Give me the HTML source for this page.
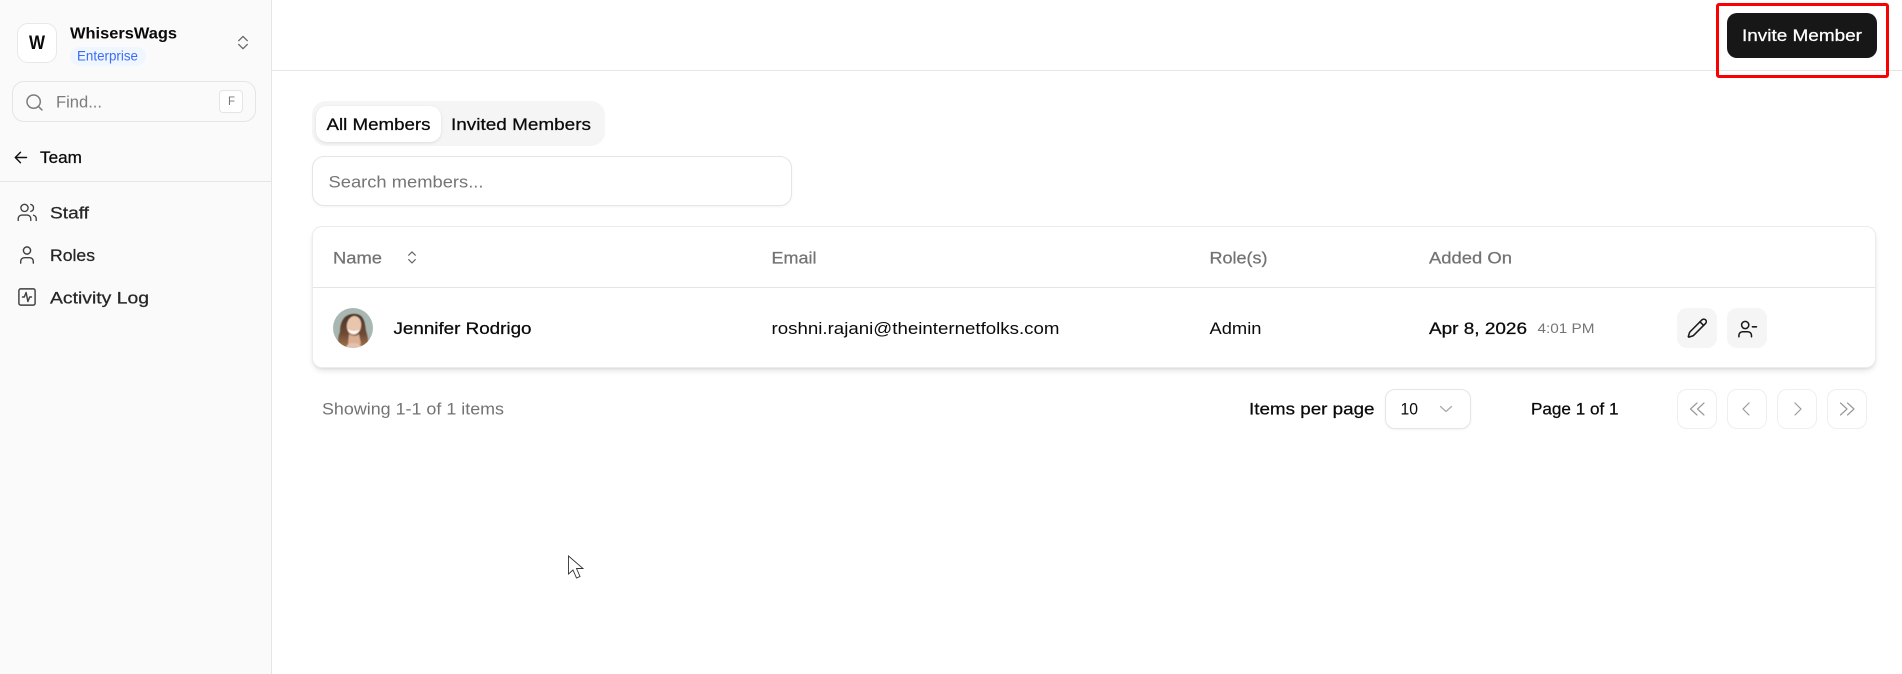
<!DOCTYPE html>
<html lang="en">
<head>
<meta charset="utf-8">
<title>Team - Staff</title>
<style>
html,body{margin:0;padding:0;width:1902px;height:674px;overflow:hidden;background:#fff}
body{position:relative;font-family:"Liberation Sans",sans-serif}
.b{position:absolute;box-sizing:border-box}
svg.o{position:absolute;left:0;top:0}
svg.o text{font-family:"Liberation Sans",sans-serif;font-size:16.5px}
.m{stroke:currentColor;stroke-width:.25px}
.i{fill:none;stroke-linecap:round;stroke-linejoin:round}
</style>
</head>
<body>
<div class="b" style="left:0;top:0;width:272px;height:674px;background:#fafafa;border-right:1px solid #e5e5e5"></div>
<div class="b" style="left:272px;top:70px;width:1630px;height:1px;background:#e5e5e5"></div>
<div class="b" style="left:0;top:181px;width:271px;height:1px;background:#e5e5e5"></div>
<div class="b" style="left:17px;top:23px;width:40px;height:40px;border:1px solid #e8e8e8;border-radius:11px;background:#fff"></div>
<div class="b" style="left:70px;top:47px;width:76px;height:19px;border-radius:10px;background:#eff6ff"></div>
<div class="b" style="left:12px;top:81px;width:244px;height:41px;border:1px solid #e5e5e5;border-radius:12px"></div>
<div class="b" style="left:219px;top:90px;width:24px;height:23px;border:1px solid #e5e5e5;border-radius:4px;background:#fff"></div>

<div class="b" style="left:312px;top:101px;width:293px;height:45px;border-radius:14px;background:#f5f5f5"></div>
<div class="b" style="left:316px;top:106px;width:125px;height:36px;border-radius:11px;background:#fff;box-shadow:0 1px 3px rgba(0,0,0,.1)"></div>
<div class="b" style="left:312px;top:156px;width:480px;height:50px;border:1px solid #e5e5e5;border-radius:12px;background:#fff;box-shadow:0 1px 2px rgba(0,0,0,.05)"></div>
<div class="b" style="left:312px;top:226px;width:1564px;height:142px;border:1px solid #ececec;border-radius:10px;background:#fff;box-shadow:0 4px 7px -2px rgba(0,0,0,.13),0 1px 2px rgba(0,0,0,.06)"></div>
<div class="b" style="left:313px;top:287px;width:1562px;height:1px;background:#e5e5e5"></div>
<div class="b" style="left:1677px;top:308px;width:40px;height:40px;border-radius:10px;background:#f5f5f5"></div>
<div class="b" style="left:1727px;top:308px;width:40px;height:40px;border-radius:10px;background:#f5f5f5"></div>

<div class="b" style="left:1385px;top:389px;width:86px;height:40px;border:1px solid #e5e5e5;border-radius:10px;background:#fff;box-shadow:0 1px 2px rgba(0,0,0,.05)"></div>
<div class="b" style="left:1677px;top:389px;width:40px;height:40px;border:1px solid #efefef;border-radius:10px"></div>
<div class="b" style="left:1727px;top:389px;width:40px;height:40px;border:1px solid #efefef;border-radius:10px"></div>
<div class="b" style="left:1777px;top:389px;width:40px;height:40px;border:1px solid #efefef;border-radius:10px"></div>
<div class="b" style="left:1827px;top:389px;width:40px;height:40px;border:1px solid #efefef;border-radius:10px"></div>

<div class="b" style="left:1727px;top:13px;width:150px;height:45px;border-radius:10px;background:#171717"></div>
<div class="b" style="left:1716px;top:3px;width:173px;height:75px;border:3.5px solid #fb0000;border-radius:3px"></div>

<svg class="o" width="1902" height="674" viewBox="0 0 1902 674" xmlns="http://www.w3.org/2000/svg">
  <defs>
    <clipPath id="av"><circle cx="353" cy="328" r="20"/></clipPath>
    <linearGradient id="hair" x1="0" y1="0" x2="0" y2="1"><stop offset="0" stop-color="#4a3228"/><stop offset=".55" stop-color="#6e4a34"/><stop offset="1" stop-color="#a97a52"/></linearGradient>
    <filter id="bl" x="-10%" y="-10%" width="120%" height="120%"><feGaussianBlur stdDeviation=".6"/></filter>
  </defs>

  <!-- sidebar text -->
  <text x="29" y="49" textLength="16" lengthAdjust="spacingAndGlyphs" font-weight="700" style="font-size:19px" fill="#0a0a0a">W</text>
  <text x="70" y="38.5" textLength="107" lengthAdjust="spacingAndGlyphs" font-weight="700" style="font-size:16px" fill="#0a0a0a">WhisersWags</text>
  <text x="77" y="60.5" textLength="61" lengthAdjust="spacingAndGlyphs" style="font-size:14px" fill="#3b6cf6">Enterprise</text>
  <text x="56" y="107.5" textLength="46" lengthAdjust="spacingAndGlyphs" fill="#7c7c7c">Find...</text>
  <text x="228" y="105" textLength="7" lengthAdjust="spacingAndGlyphs" style="font-size:12px" fill="#777">F</text>
  <text x="40" y="163" textLength="42" lengthAdjust="spacingAndGlyphs" class="m" color="#0a0a0a" fill="#0a0a0a">Team</text>
  <text x="50" y="218.5" textLength="39" lengthAdjust="spacingAndGlyphs" class="m" color="#262626" fill="#262626">Staff</text>
  <text x="50" y="261" textLength="45" lengthAdjust="spacingAndGlyphs" class="m" color="#262626" fill="#262626">Roles</text>
  <text x="50" y="303.5" textLength="99" lengthAdjust="spacingAndGlyphs" class="m" color="#262626" fill="#262626">Activity Log</text>

  <!-- sidebar icons -->
  <g class="i" stroke="#666" stroke-width="1.3"><path d="M238.7 40.7l4.3-4.3 4.3 4.3"/><path d="M238.7 44.4l4.3 4.3 4.3-4.3"/></g>
  <g class="i" stroke="#7c7c7c" stroke-width="1.8" transform="translate(24.5 92.5) scale(.83)"><circle cx="11" cy="11" r="8"/><path d="m21 21-4.3-4.3"/></g>
  <g class="i" stroke="#111" stroke-width="1.4"><path d="M26.5 157.5H15.5"/><path d="M20.5 152.3l-5.2 5.2 5.2 5.2"/></g>
  <g class="i" stroke="#404040" stroke-width="1.5" transform="translate(16.4 201.6) scale(.9)"><path d="M16 21v-2a4 4 0 0 0-4-4H6a4 4 0 0 0-4 4v2"/><circle cx="9" cy="7" r="4"/><path d="M22 21v-2a4 4 0 0 0-3-3.87"/><path d="M16 3.13a4 4 0 0 1 0 7.75"/></g>
  <g class="i" stroke="#404040" stroke-width="1.6" transform="translate(16.2 244.2) scale(.9)"><path d="M19 21v-2a4 4 0 0 0-4-4H9a4 4 0 0 0-4 4v2"/><circle cx="12" cy="7" r="4"/></g>
  <g class="i" stroke="#404040" stroke-width="1.6" transform="translate(16.2 286.2) scale(.9)"><rect x="3" y="3" width="18" height="18" rx="2"/><path d="M17 12h-2l-2 5-2-10-2 5H7"/></g>

  <!-- tabs / search -->
  <text x="326.5" y="130" textLength="104" lengthAdjust="spacingAndGlyphs" class="m" color="#0a0a0a" fill="#0a0a0a">All Members</text>
  <text x="451" y="130" textLength="140" lengthAdjust="spacingAndGlyphs" class="m" color="#0a0a0a" fill="#0a0a0a">Invited Members</text>
  <text x="328.5" y="187.5" textLength="155" lengthAdjust="spacingAndGlyphs" fill="#757575">Search members...</text>

  <!-- table -->
  <text x="333" y="263.5" textLength="49" lengthAdjust="spacingAndGlyphs" class="m" color="#737373" fill="#737373">Name</text>
  <text x="771.5" y="263.5" textLength="45" lengthAdjust="spacingAndGlyphs" class="m" color="#737373" fill="#737373">Email</text>
  <text x="1209.5" y="263.5" textLength="58" lengthAdjust="spacingAndGlyphs" class="m" color="#737373" fill="#737373">Role(s)</text>
  <text x="1429" y="263.5" textLength="83" lengthAdjust="spacingAndGlyphs" class="m" color="#737373" fill="#737373">Added On</text>
  <g class="i" stroke="#666" stroke-width="1.2"><path d="M408.7 255.2l3.3-3.3 3.3 3.3"/><path d="M408.7 259.6l3.3 3.3 3.3-3.3"/></g>

  <g clip-path="url(#av)">
    <rect x="333" y="308" width="40" height="40" fill="#a9b7b3"/>
    <g filter="url(#bl)">
      <path d="M340 350c-3-8-2-13 0-18 0-5 1-11 5-15 5-4 12-4 16-1 4 4 4 9 5 15 2 6 3 12 1 19z" fill="url(#hair)"/>
      <ellipse cx="354" cy="325.5" rx="7.2" ry="9.5" fill="#e8c6ae" transform="rotate(8 354 325.5)"/>
      <path d="M348 329c2.500 2.500 8.500 3 11.500 .5-1 5-10 6-11.500-.5z" fill="#fff"/>
      <path d="M349 334c3 2.500 8 2.500 10 0l2 10h-13z" fill="#dcae94"/>
      <path d="M345 350c1-4 3-7 7-7h4c3 0 6 3 7 7z" fill="#e2c2ac"/>
    </g>
  </g>
  <text x="393.5" y="334" textLength="138" lengthAdjust="spacingAndGlyphs" class="m" color="#0a0a0a" fill="#0a0a0a">Jennifer Rodrigo</text>
  <text x="771.5" y="334" textLength="288" lengthAdjust="spacingAndGlyphs" fill="#0a0a0a">roshni.rajani@theinternetfolks.com</text>
  <text x="1209.5" y="334" textLength="52" lengthAdjust="spacingAndGlyphs" fill="#0a0a0a">Admin</text>
  <text x="1429" y="334" textLength="98" lengthAdjust="spacingAndGlyphs" class="m" color="#0a0a0a" fill="#0a0a0a">Apr 8, 2026</text>
  <text x="1537.5" y="333" textLength="57" lengthAdjust="spacingAndGlyphs" style="font-size:14px" fill="#757575">4:01 PM</text>
  <g class="i" stroke="#1a1a1a" stroke-width="1.7" transform="translate(1686.5 317.3) scale(.9)"><path d="M21.174 6.812a1 1 0 0 0-3.986-3.987L3.842 16.174a2 2 0 0 0-.5.83l-1.321 4.352a.5.5 0 0 0 .623.622l4.353-1.32a2 2 0 0 0 .83-.497z"/><path d="m15 5 4 4"/></g>
  <g class="i" stroke="#1a1a1a" stroke-width="1.7" transform="translate(1737.1 318.7) scale(.9)"><path d="M16 20v-1.500a4 4 0 0 0-4-4H6a4 4 0 0 0-4 4V20"/><circle cx="9" cy="7" r="4"/><path d="M21.500 9h-4.500"/></g>

  <!-- footer -->
  <text x="322" y="414.500" textLength="182" lengthAdjust="spacingAndGlyphs" fill="#737373">Showing 1-1 of 1 items</text>
  <text x="1249" y="414.500" textLength="125.500" lengthAdjust="spacingAndGlyphs" class="m" color="#0a0a0a" fill="#0a0a0a">Items per page</text>
  <text x="1400.500" y="414.500" textLength="17.500" lengthAdjust="spacingAndGlyphs" fill="#0a0a0a">10</text>
  <g class="i" stroke="#aaa" stroke-width="1.300"><path d="M1440.500 406.500l5.500 5 5.500-5"/></g>
  <text x="1531" y="414.500" textLength="87.500" lengthAdjust="spacingAndGlyphs" class="m" color="#0a0a0a" fill="#0a0a0a">Page 1 of 1</text>
  <g class="i" stroke="#9a9a9a" stroke-width="1.200">
    <path d="M1697 403l-6.500 6 6.500 6"/><path d="M1704 403l-6.500 6 6.500 6"/>
    <path d="M1749 403l-6 6 6 6"/>
    <path d="M1795 403l6 6-6 6"/>
    <path d="M1840.500 403l6.500 6-6.500 6"/><path d="M1847.500 403l6.500 6-6.500 6"/>
  </g>

  <!-- invite button -->
  <text x="1742" y="41" textLength="120" lengthAdjust="spacingAndGlyphs" class="m" color="#fff" fill="#fff">Invite Member</text>

  <!-- cursor -->
  <path d="M568.500 556v18l4.500-4 3.500 8 3.500-1.500-3.500-8H583z" fill="#fff" stroke="#333" stroke-width=".9"/>
</svg>
</body>
</html>
